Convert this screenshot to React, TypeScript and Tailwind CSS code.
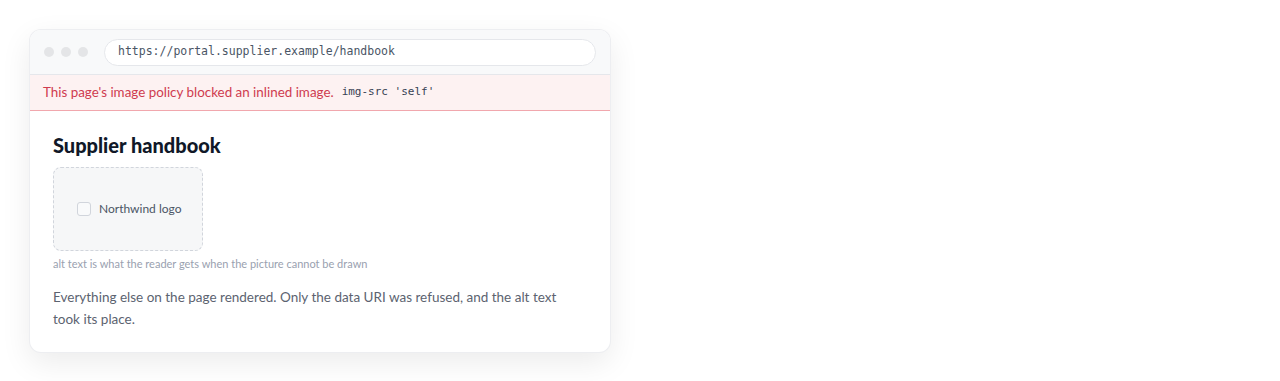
import React from "react";

export default function App() {
  return (
    <div className="min-h-[381px] w-[1280px] bg-white p-[29px]" style={{ fontFamily: "Lato, sans-serif" }}>
      <div className="w-[582px] overflow-hidden rounded-xl border border-gray-200/70 bg-white shadow-[0_10px_30px_rgba(0,0,0,0.08)]">
        <div className="flex h-[45px] items-center gap-[7px] border-b border-gray-200 bg-[#f8f9fa] pl-[14px] pr-[14px]">
          <span className="h-[10px] w-[10px] rounded-full bg-[#e4e5e7]" />
          <span className="h-[10px] w-[10px] rounded-full bg-[#e4e5e7]" />
          <span className="h-[10px] w-[10px] rounded-full bg-[#e4e5e7]" />
          <div
            className="ml-[9px] flex h-[27px] flex-1 items-center rounded-full border border-gray-200 bg-white px-[13px] text-[11.5px] text-gray-600"
            style={{ fontFamily: "'DejaVu Sans Mono', monospace" }}
          >
            https://portal.supplier.example/handbook
          </div>
        </div>
        <div className="flex h-[36px] items-center gap-[8px] border-b border-[#f1a7ad] bg-[#fdf2f2] px-[13px] text-[13.4px] text-[#cf3b4f]">
          <span>This page's image policy blocked an inlined image.</span>
          <code className="text-[11px] text-gray-700" style={{ fontFamily: "'DejaVu Sans Mono', monospace" }}>
            img-src 'self'
          </code>
        </div>
        <div className="px-[23px] pb-[22px] pt-[21px]">
          <h1 className="text-[20px] font-black leading-[26px] text-gray-900">Supplier handbook</h1>
          <div className="mt-[9px] flex h-[84px] w-[150px] items-center gap-[8px] rounded-lg border border-dashed border-gray-300 bg-[#f6f7f8] pl-[23px]">
            <span className="h-[14px] w-[14px] rounded-[3px] border border-gray-300 bg-[#f9fafb]" />
            <span className="text-[12px] text-gray-600">Northwind logo</span>
          </div>
          <p className="mt-[5px] text-[11px] leading-[16px] text-gray-400">alt text is what the reader gets when the picture cannot be drawn</p>
          <p className="mt-[14px] max-w-[515px] text-[13.5px] leading-[22px] text-[#5c6370]">
            Everything else on the page rendered. Only the data URI was refused, and the alt text took its place.
          </p>
        </div>
      </div>
    </div>
  );
}
